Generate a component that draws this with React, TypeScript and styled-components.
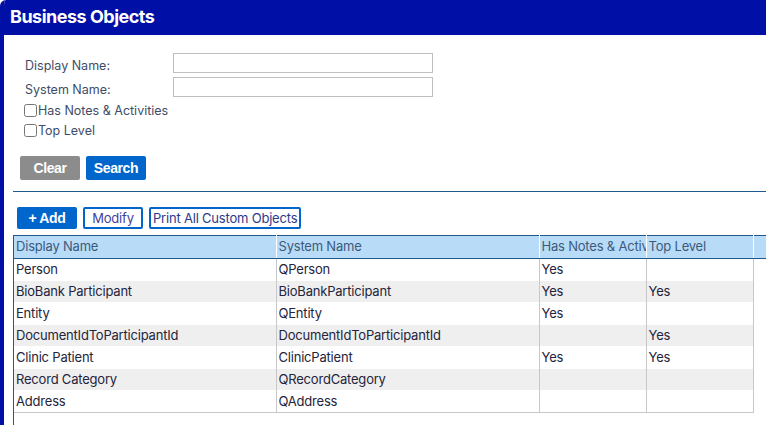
import React from "react";
import styled, { createGlobalStyle } from "styled-components";

const GlobalStyle = createGlobalStyle`
  html, body {
    margin: 0;
    padding: 0;
    overflow: hidden;
    background: #ffffff;
  }
  body {
    font-family: Inter, "Noto Sans", sans-serif;
  }
`;

type BusinessObject = {
  displayName: string;
  systemName: string;
  hasNotes: boolean;
  topLevel: boolean;
};

const objects: BusinessObject[] = [
  { displayName: "Person", systemName: "QPerson", hasNotes: true, topLevel: false },
  { displayName: "BioBank Participant", systemName: "BioBankParticipant", hasNotes: true, topLevel: true },
  { displayName: "Entity", systemName: "QEntity", hasNotes: true, topLevel: false },
  { displayName: "DocumentIdToParticipantId", systemName: "DocumentIdToParticipantId", hasNotes: false, topLevel: true },
  { displayName: "Clinic Patient", systemName: "ClinicPatient", hasNotes: true, topLevel: true },
  { displayName: "Record Category", systemName: "QRecordCategory", hasNotes: false, topLevel: false },
  { displayName: "Address", systemName: "QAddress", hasNotes: false, topLevel: false },
];

const App = () => {
  return (
    <>
      <GlobalStyle />
      <Panel>
        <Header>
          <Title>Business Objects</Title>
        </Header>
        <SearchForm>
          <FieldGrid>
            <FieldLabel>Display Name:</FieldLabel>
            <TextInput type="text" />
            <FieldLabel>System Name:</FieldLabel>
            <TextInput type="text" />
          </FieldGrid>
          <CheckList>
            <CheckRow>
              <Check type="checkbox" />
              Has Notes &amp; Activities
            </CheckRow>
            <CheckRow>
              <Check type="checkbox" />
              Top Level
            </CheckRow>
          </CheckList>
          <ButtonRow>
            <SolidButton $tone="gray">Clear</SolidButton>
            <SolidButton $tone="blue">Search</SolidButton>
          </ButtonRow>
        </SearchForm>
        <ResultsSection>
          <Divider />
          <Toolbar>
            <SolidButton $tone="blue" $small>
              + Add
            </SolidButton>
            <OutlineButton $width={60}>Modify</OutlineButton>
            <OutlineButton $dark>Print All Custom Objects</OutlineButton>
          </Toolbar>
          <GridWrap>
            <Grid>
              <colgroup>
                <col style={{ width: 262 }} />
                <col style={{ width: 263 }} />
                <col style={{ width: 107 }} />
                <col style={{ width: 107 }} />
                <col style={{ width: 60 }} />
              </colgroup>
              <thead>
                <tr>
                  <HeadCell>Display Name</HeadCell>
                  <HeadCell>System Name</HeadCell>
                  <HeadCell>Has Notes &amp; Activities</HeadCell>
                  <HeadCell>Top Level</HeadCell>
                  <HeadCell />
                </tr>
              </thead>
              <tbody>
                {objects.map((obj, i) => (
                  <BodyRow key={obj.systemName} $odd={i % 2 === 1}>
                    <Cell>{obj.displayName}</Cell>
                    <Cell>{obj.systemName}</Cell>
                    <Cell>{obj.hasNotes ? "Yes" : ""}</Cell>
                    <Cell>{obj.topLevel ? "Yes" : ""}</Cell>
                    <SpacerCell />
                  </BodyRow>
                ))}
              </tbody>
            </Grid>
          </GridWrap>
        </ResultsSection>
      </Panel>
    </>
  );
};

const Panel = styled.div`
  width: 830px;
  height: 425px;
  border-left: 4px solid #000fa5;
  border-top-left-radius: 6px;
  overflow: hidden;
  display: flex;
  flex-direction: column;
`;

const Header = styled.div`
  height: 35px;
  background: #000fa5;
  display: flex;
  align-items: center;
  padding-left: 6px;
  flex-shrink: 0;
`;

const Title = styled.h1`
  margin: 0;
  color: #ffffff;
  font-size: 18px;
  font-weight: 700;
  letter-spacing: -0.5px;
  line-height: 1;
  padding-bottom: 2px;
`;

const SearchForm = styled.div`
  padding: 18px 0 0 16px;
`;

const FieldGrid = styled.div`
  display: grid;
  grid-template-columns: 148px 260px;
  row-gap: 4px;
  margin-left: 5px;
`;

const FieldLabel = styled.label`
  font-size: 12.5px;
  color: #3e4c6a;
  display: flex;
  align-items: center;
  padding-top: 4px;
`;

const TextInput = styled.input`
  box-sizing: border-box;
  width: 260px;
  height: 20px;
  border: 1px solid #bfbfbf;
  padding: 0 4px;
  margin: 0;
  outline: none;
`;

const CheckList = styled.div`
  margin-top: 3px;
`;

const CheckRow = styled.label`
  display: flex;
  align-items: center;
  height: 20px;
  margin-left: 4px;
  font-size: 12.5px;
  color: #3e4c6a;
`;

const Check = styled.input`
  width: 13px;
  height: 13px;
  margin: 0 1px 0 0;
`;

const ButtonRow = styled.div`
  display: flex;
  gap: 6px;
  margin-top: 16px;
`;

const SolidButton = styled.button<{ $tone: "gray" | "blue"; $small?: boolean }>`
  width: 60px;
  height: ${(p) => (p.$small ? "22px" : "24px")};
  border: none;
  border-radius: 2px;
  background: ${(p) => (p.$tone === "gray" ? "#8c8c8c" : "#0066cc")};
  color: #ffffff;
  font-family: "Liberation Sans", Arial, sans-serif;
  font-weight: 700;
  font-size: 14px;
  letter-spacing: -0.4px;
  padding: 0;
  cursor: pointer;
`;

const ResultsSection = styled.div`
  margin-left: 9px;
  display: flex;
  flex-direction: column;
  flex: 1;
  margin-top: 11px;
`;

const Divider = styled.div`
  height: 1px;
  background: #1f5a8a;
`;

const Toolbar = styled.div`
  display: flex;
  gap: 6px;
  margin: 15px 0 6px 4px;
`;

const OutlineButton = styled.button<{ $width?: number; $dark?: boolean }>`
  box-sizing: border-box;
  ${(p) => (p.$width ? `width: ${p.$width}px;` : "padding: 0 2px;")}
  height: 22px;
  border: 2px solid #0066cc;
  border-radius: 2px;
  background: #ffffff;
  color: ${(p) => (p.$dark ? "#2b3a8c" : "#3f3fa0")};
  font-family: Inter, "Noto Sans", sans-serif;
  font-size: 13px;
  letter-spacing: -0.2px;
  cursor: pointer;
`;

const GridWrap = styled.div`
  flex: 1;
  border-left: 1px solid #1f5a8a;
`;

const Grid = styled.table`
  border-collapse: collapse;
  table-layout: fixed;
  width: 799px;
  font-size: 13px;
`;

const HeadCell = styled.th`
  height: 19px;
  padding: 0 0 3px 2px;
  background: #b8dcf7;
  color: #3c5a7c;
  font-weight: 400;
  text-align: left;
  white-space: nowrap;
  overflow: hidden;
  text-overflow: clip;
  border-top: 1px solid #1f5a8a;
  border-bottom: 1px solid #1f5a8a;
  border-right: 1px solid #ffffff;
  letter-spacing: -0.2px;
`;

const BodyRow = styled.tr<{ $odd: boolean }>`
  background: ${(p) => (p.$odd ? "#efefef" : "#ffffff")};
`;

const Cell = styled.td`
  height: 19px;
  padding: 0 0 2px 2px;
  color: #24243c;
  white-space: nowrap;
  overflow: hidden;
  border-right: 1px solid #c8c8c8;
  border-bottom: 1px solid transparent;
  letter-spacing: -0.2px;
  tr:last-child & {
    border-bottom: 1px solid #c8c8c8;
  }
`;

const SpacerCell = styled.td`
  background: #ffffff;
`;

export default App;
